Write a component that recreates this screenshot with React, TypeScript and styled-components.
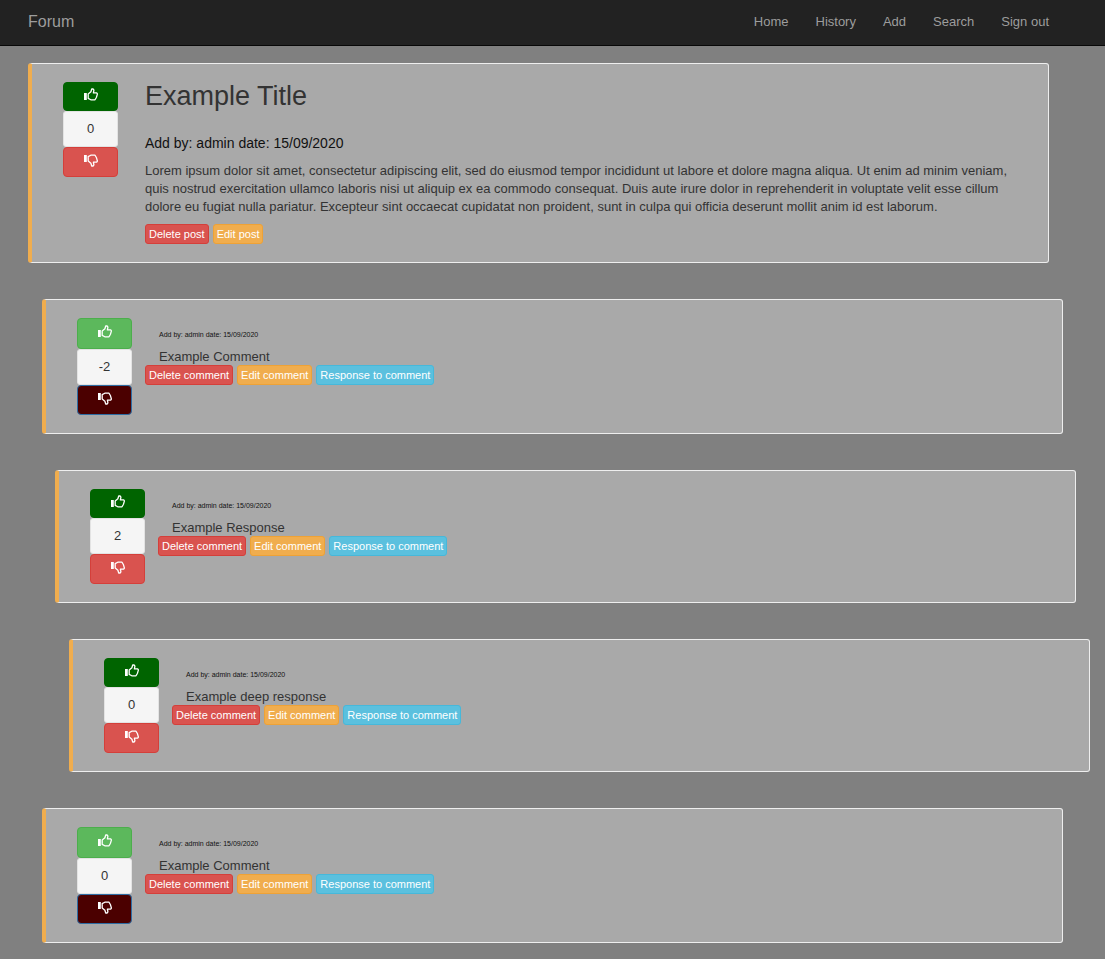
import React from "react";
import styled, { createGlobalStyle } from "styled-components";

const GlobalStyle = createGlobalStyle`
  *, *::before, *::after { box-sizing: border-box; }
  body {
    margin: 0;
    background: #808080;
    color: #333;
    font: 13px/18px "Liberation Sans", Arial, sans-serif;
  }
`;

const Navbar = styled.nav`
  display: flex;
  align-items: center;
  justify-content: space-between;
  min-height: 46px;
  padding: 0 56px 2px 28px;
  background: #222;
  border-bottom: 1px solid #080808;
`;

const Brand = styled.a`
  color: #9d9d9d;
  font-size: 16px;
  text-decoration: none;
`;

const NavLinks = styled.ul`
  display: flex;
  gap: 27px;
  margin: 0;
  padding: 0;
  list-style: none;
`;

const NavLink = styled.a`
  color: #9d9d9d;
  text-decoration: none;
`;

const Feed = styled.main`
  display: flex;
  flex-direction: column;
  gap: 36px;
  padding: 17px 56px 16px 28px;
`;

const indent = (depth: number) => Math.round(depth * 13.5);

const Card = styled.article<{ $depth: number }>`
  display: flex;
  align-items: flex-start;
  gap: 13px;
  margin: 0 ${(p) => -indent(p.$depth)}px 0 ${(p) => indent(p.$depth)}px;
  padding: 18px 31px;
  background: #a9a9a9;
  border: 1px solid #eee;
  border-left: 4px solid #f0ad4e;
  border-radius: 3px;
`;

const Votes = styled.div`
  display: flex;
  flex: none;
  flex-direction: column;
  width: 55px;
`;

const VoteButton = styled.button<{ $kind: "up" | "down"; $active?: boolean }>`
  display: flex;
  justify-content: center;
  align-items: center;
  height: ${(p) => (p.$kind === "down" ? 30 : p.$active ? 29 : 31)}px;
  padding: 0 0 4px;
  color: #fff;
  border-radius: 4px;
  border: 1px solid
    ${(p) =>
      p.$kind === "up"
        ? p.$active ? "#006400" : "#4cae4c"
        : p.$active ? "#2e6da4" : "#d43f3a"};
  background: ${(p) =>
    p.$kind === "up"
      ? p.$active ? "#006400" : "#5cb85c"
      : p.$active ? "#4b0000" : "#d9534f"};
  cursor: pointer;
`;

const Score = styled.output`
  height: 36px;
  line-height: 34px;
  text-align: center;
  background: #f5f5f5;
  border: 1px solid #e3e3e3;
  border-radius: 3px;
`;

const Body = styled.div`
  flex: 1;
  min-width: 0;
`;

const PostText = styled.div`
  padding-left: 14px;
`;

const Title = styled.h1`
  margin: 0 0 23px;
  font-size: 27px;
  font-weight: 400;
  line-height: 28px;
`;

const PostMeta = styled.p`
  margin: 0 0 9px;
  color: #111;
  font-size: 14px;
  line-height: 20px;
`;

const Paragraph = styled.p`
  margin: 0 0 8px;
`;

const CommentText = styled.div`
  padding: 13px 0 0 14px;
`;

const CommentMeta = styled.p`
  margin: 0 0 9px;
  color: #111;
  font-size: 7px;
  line-height: 8px;
`;

const CommentContent = styled.p`
  margin: 0;
  line-height: 17px;
`;

const Actions = styled.div`
  display: flex;
  gap: 4px;
`;

const tones = {
  danger: ["#d9534f", "#d43f3a"],
  warning: ["#f0ad4e", "#eea236"],
  info: ["#5bc0de", "#46b8da"],
};

const ActionButton = styled.button<{ $tone: keyof typeof tones }>`
  height: 20px;
  padding: 0 3px;
  color: #fff;
  background: ${(p) => tones[p.$tone][0]};
  border: 1px solid ${(p) => tones[p.$tone][1]};
  border-radius: 3px;
  font: 11px/16px "Liberation Sans", Arial, sans-serif;
  cursor: pointer;
`;

function Thumb({ down = false }: { down?: boolean }) {
  return (
    <svg width="14" height="13" viewBox="0 0 14 13" fill="none" aria-hidden="true">
      <g transform={down ? "matrix(1 0 0 -1 0 13)" : undefined}>
        <path d="M0 5h2.8v7H0z" fill="#fff" />
        <path
          d="M4.2 6 6.9 3.7 7.7 1h1.5l.7 1.2-.5 2.7h3.3l.7 1-.9 3.3-1.5 2.6H6.8L4.2 10.4z"
          stroke="#fff"
          strokeWidth="1.3"
          strokeLinejoin="round"
        />
      </g>
    </svg>
  );
}

type Vote = "up" | "down";

function VoteColumn({ score, voted }: { score: number; voted: Vote }) {
  return (
    <Votes>
      <VoteButton type="button" aria-label="Vote up" $kind="up" $active={voted === "up"}>
        <Thumb />
      </VoteButton>
      <Score>{score}</Score>
      <VoteButton type="button" aria-label="Vote down" $kind="down" $active={voted === "down"}>
        <Thumb down />
      </VoteButton>
    </Votes>
  );
}

const links = ["Home", "History", "Add", "Search", "Sign out"];

const comments: { text: string; score: number; voted: Vote; depth: number }[] = [
  { text: "Example Comment", score: -2, voted: "down", depth: 1 },
  { text: "Example Response", score: 2, voted: "up", depth: 2 },
  { text: "Example deep response", score: 0, voted: "up", depth: 3 },
  { text: "Example Comment", score: 0, voted: "down", depth: 1 },
];

export default function App() {
  return (
    <>
      <GlobalStyle />
      <Navbar>
        <Brand href="#">Forum</Brand>
        <NavLinks>
          {links.map((label) => (
            <li key={label}>
              <NavLink href="#">{label}</NavLink>
            </li>
          ))}
        </NavLinks>
      </Navbar>
      <Feed>
        <Card $depth={0}>
          <VoteColumn score={0} voted="up" />
          <Body>
            <PostText>
              <Title>Example Title</Title>
              <PostMeta>Add by: admin date: 15/09/2020</PostMeta>
              <Paragraph>
                Lorem ipsum dolor sit amet, consectetur adipiscing elit, sed do eiusmod tempor
                incididunt ut labore et dolore magna aliqua. Ut enim ad minim veniam, quis nostrud
                exercitation ullamco laboris nisi ut aliquip ex ea commodo consequat. Duis aute
                irure dolor in reprehenderit in voluptate velit esse cillum dolore eu fugiat nulla
                pariatur. Excepteur sint occaecat cupidatat non proident, sunt in culpa qui officia
                deserunt mollit anim id est laborum.
              </Paragraph>
              <Actions>
                <ActionButton type="button" $tone="danger">Delete post</ActionButton>
                <ActionButton type="button" $tone="warning">Edit post</ActionButton>
              </Actions>
            </PostText>
          </Body>
        </Card>
        {comments.map((c, i) => (
          <Card key={i} $depth={c.depth}>
            <VoteColumn score={c.score} voted={c.voted} />
            <Body>
              <CommentText>
                <CommentMeta>Add by: admin date: 15/09/2020</CommentMeta>
                <CommentContent>{c.text}</CommentContent>
              </CommentText>
              <Actions>
                <ActionButton type="button" $tone="danger">Delete comment</ActionButton>
                <ActionButton type="button" $tone="warning">Edit comment</ActionButton>
                <ActionButton type="button" $tone="info">Response to comment</ActionButton>
              </Actions>
            </Body>
          </Card>
        ))}
      </Feed>
    </>
  );
}
